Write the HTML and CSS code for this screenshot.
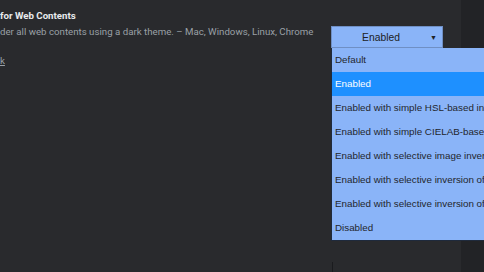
FILE: index.html
```html
<!DOCTYPE html>
<html lang="en">
<head>
    <meta charset="UTF-8">
    <title>Flags</title>
    <link rel="stylesheet" href="styles.css">
</head>
<body>
    <div class="page">
        <!-- Experiment list -->
        <div class="content">
            <div class="experiment">
                <div class="info">
                    <h3 class="title">for Web Contents</h3>
                    <p class="desc">der all web contents using a dark theme. – Mac, Windows, Linux, Chrome</p>
                    <a class="link" href="#">k</a>
                </div>
                <div class="control">
                    <div class="select">
                        <span class="value">Enabled</span>
                        <span class="arrow">▼</span>
                    </div>
                    <!-- open dropdown -->
                    <ul class="options">
                        <li>Default</li>
                        <li class="selected">Enabled</li>
                        <li>Enabled with simple HSL-based inversion</li>
                        <li>Enabled with simple CIELAB-based inversion</li>
                        <li>Enabled with selective image inversion</li>
                        <li>Enabled with selective inversion of non-image elements</li>
                        <li>Enabled with selective inversion of everything</li>
                        <li>Disabled</li>
                    </ul>
                </div>
            </div>
            <div class="divider"></div>
        </div>
        <div class="sidebar"></div>
    </div>
</body>
</html>
```

FILE: styles.css
```css
body {
    margin: 0;
    background: #292a2d;
    font-family: Roboto, "Liberation Sans", sans-serif;
    overflow: hidden;
}

.page {
    display: flex;
    height: 272px;
}

.content {
    width: 461px;
    flex-shrink: 0;
    display: flex;
    flex-direction: column;
}

.sidebar {
    flex-grow: 1;
    background: #222326;
}

.experiment {
    display: flex;
    padding-top: 9px;
}

.info {
    width: 331px;
}

.title {
    margin: 0;
    font-size: 9.7px;
    font-weight: 700;
    color: #e8eaed;
    line-height: 13px;
}

.desc {
    margin: 3px 0 0;
    font-size: 9.7px;
    color: #9aa0a6;
    line-height: 13px;
}

.link {
    display: inline-block;
    margin-top: 17px;
    font-size: 9.7px;
    color: #9aa0a6;
}

.control {
    position: relative;
    padding-top: 17px;
}

.select {
    width: 112px;
    height: 22px;
    box-sizing: border-box;
    background: #8ab4f8;
    border: 1px solid #6f8fc4;
    display: flex;
    align-items: center;
    padding-right: 12px;
    position: relative;
    font-family: "Liberation Sans", Arial, sans-serif;
    font-size: 10.3px;
    color: #202124;
}

.select .value {
    flex-grow: 1;
    text-align: center;
}

.select .arrow {
    position: absolute;
    right: 5px;
    font-size: 7px;
}

.options {
    position: absolute;
    left: 0;
    top: 39px;
    width: 180px;
    margin: 0;
    padding: 0;
    list-style: none;
    background: #8ab4f8;
    border-left: 1px solid #1f2a3c;
    border-bottom: 1px solid #1f2a3c;
    font-family: "Liberation Sans", Arial, sans-serif;
    font-size: 9.8px;
    color: #23262c;
    white-space: nowrap;
    overflow: hidden;
}

.options li {
    height: 24px;
    line-height: 24px;
    padding-left: 3px;
}

.options .selected {
    background: #1e90ff;
    color: #ffffff;
}

.divider {
    margin: auto 0 0 332px;
    width: 1px;
    height: 10px;
    background: #1a1b1e;
}
```
